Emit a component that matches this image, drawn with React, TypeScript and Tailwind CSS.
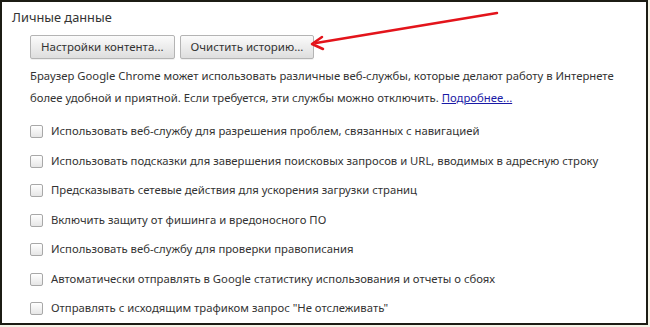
const options = [
  "Использовать веб-службу для разрешения проблем, связанных с навигацией",
  "Использовать подсказки для завершения поисковых запросов и URL, вводимых в адресную строку",
  "Предсказывать сетевые действия для ускорения загрузки страниц",
  "Включить защиту от фишинга и вредоносного ПО",
  "Использовать веб-службу для проверки правописания",
  "Автоматически отправлять в Google статистику использования и отчеты о сбоях",
  'Отправлять с исходящим трафиком запрос "Не отслеживать"',
];

function Button({ children }: { children: React.ReactNode }) {
  return (
    <button
      type="button"
      className="h-[24px] rounded-[2px] border border-[#b4b4b4] bg-gradient-to-b from-[#fbfbfb] to-[#dedede] px-[10px] text-[11.5px] text-[#333] shadow-[0_1px_0_rgba(0,0,0,0.06)]"
    >
      {children}
    </button>
  );
}

function Checkbox() {
  return (
    <span className="block h-[13px] w-[13px] shrink-0 rounded-[2px] border border-[#a8a8a8] bg-gradient-to-b from-white to-[#e6e6e6]" />
  );
}

export default function App() {
  return (
    <div className="h-[327px] w-[650px] bg-[#f4f3e6] font-['Noto_Sans',sans-serif]">
      <div className="relative h-[325px] w-[648px] border-2 border-[#1c1c14] bg-white">
        <div className="h-[33px] pl-[10px] pt-[5px] text-[12.8px] leading-[20px] text-[#333]">Личные данные</div>
        <div className="flex gap-[5px] pl-[28px]">
          <Button>Настройки контента...</Button>
          <Button>Очистить историю...</Button>
        </div>
        <p className="mt-[6px] pl-[28px] pr-[10px] text-[11.3px] leading-[22px] text-[#333]">
          Браузер Google Chrome может использовать различные веб-службы, которые делают работу в Интернете
          более удобной и приятной. Если требуется, эти службы можно отключить.{" "}
          <a className="text-[#1a1aa6] underline">Подробнее...</a>
        </p>
        <div className="mt-[8px] flex flex-col pl-[28px]">
          {options.map((label) => (
            <label key={label} className="flex h-[29.5px] items-center gap-[8px] text-[11.3px] text-[#333]">
              <Checkbox />
              <span>{label}</span>
            </label>
          ))}
        </div>
        <svg className="absolute left-0 top-0" width="648" height="325" viewBox="0 0 648 325">
          <line x1="495" y1="11" x2="314" y2="41" stroke="#e3141b" strokeWidth="2.5" strokeLinecap="round" />
          <path d="M320 35 L310 42 L321 47" fill="none" stroke="#e3141b" strokeWidth="2.5" strokeLinecap="round" strokeLinejoin="round" />
        </svg>
      </div>
    </div>
  );
}
